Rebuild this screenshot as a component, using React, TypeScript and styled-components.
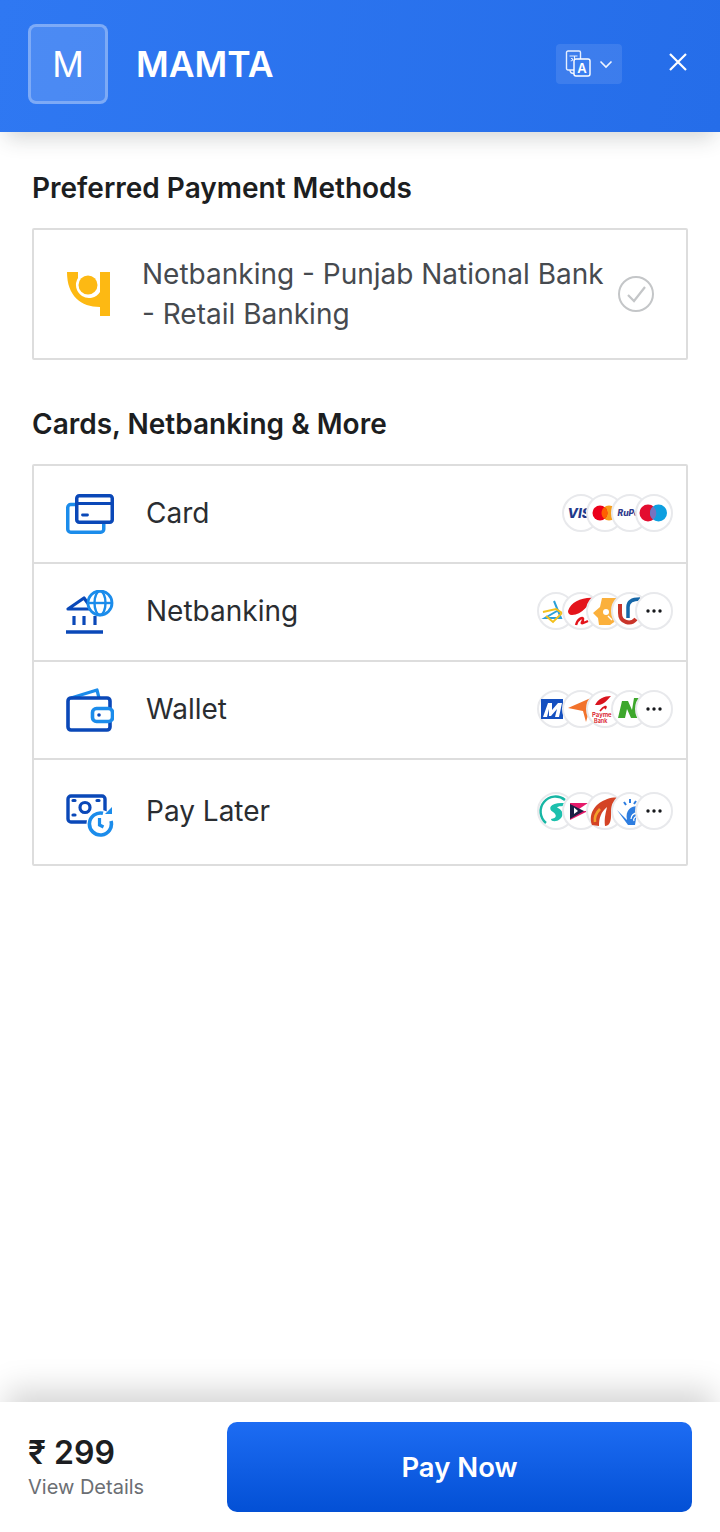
import React from "react";
import styled, { createGlobalStyle } from "styled-components";

const Global = createGlobalStyle`
  html, body { margin: 0; padding: 0; background: #fff; }
  body { font-family: Inter, "Noto Sans", sans-serif; color: #1c1e21; }
  * { box-sizing: border-box; }
`;

const Page = styled.div`
  width: 720px;
  height: 1532px;
  display: flex;
  flex-direction: column;
  background: #fff;
  overflow: hidden;
`;

const Header = styled.header`
  position: relative;
  height: 132px;
  flex: none;
  display: flex;
  align-items: center;
  padding: 0 32px 4px 28px;
  background: linear-gradient(100deg, #2f78f2 0%, #256de9 100%);
  box-shadow: 0 12px 20px -6px rgba(40, 50, 50, 0.2);
`;

const Avatar = styled.div`
  width: 80px;
  height: 80px;
  flex: none;
  display: flex;
  align-items: center;
  justify-content: center;
  border: 3px solid rgba(255, 255, 255, 0.28);
  border-radius: 8px;
  background: rgba(255, 255, 255, 0.14);
  color: #fff;
  font-size: 35px;
  font-weight: 400;
`;

const Merchant = styled.h1`
  margin: 2px 0 0 28px;
  flex: 1;
  color: #fff;
  font-size: 35.5px;
  line-height: 44px;
  font-weight: 600;
`;

const LangButton = styled.div`
  width: 66px;
  height: 40px;
  flex: none;
  display: flex;
  align-items: center;
  gap: 6px;
  padding-left: 9px;
  border-radius: 4px;
  background: rgba(255, 255, 255, 0.1);
`;

const CloseButton = styled.div`
  margin-left: 46px;
  width: 20px;
  height: 20px;
  flex: none;
  display: flex;
  align-items: center;
  justify-content: center;
  margin-bottom: 5px;
`;

const Main = styled.main`
  flex: 1;
  padding: 36px 32px 0;
  display: flex;
  flex-direction: column;
`;

const SectionTitle = styled.h2`
  margin: 0 0 20px;
  height: 40px;
  font-size: 28px;
  line-height: 40px;
  font-weight: 600;
  color: #1c1e21;
`;

const PreferredCard = styled.div`
  display: flex;
  align-items: center;
  height: 132px;
  padding: 0 31px 0 33px;
  margin-bottom: 44px;
  border: 2px solid #ddd;
  border-radius: 2px;
`;

const PreferredText = styled.div`
  flex: 1;
  margin-left: 31px;
  font-size: 28px;
  line-height: 40px;
  color: #464a4f;
`;

const List = styled.div`
  border: 2px solid #ddd;
  border-radius: 2px;
`;

const Row = styled.div<{ $tall?: boolean }>`
  display: flex;
  align-items: center;
  height: ${(p) => (p.$tall ? 104 : 98)}px;
  padding: 0 13px 0 32px;
  border-bottom: ${(p) => (p.$tall ? "none" : "2px solid #ddd")};
`;

const RowIcon = styled.div<{ $drop?: number }>`
  width: 48px;
  height: 44px;
  flex: none;
  display: flex;
  align-items: center;
  margin-top: ${(p) => p.$drop ?? 0}px;
`;

const RowLabel = styled.div`
  flex: 1;
  margin: 0 0 2px 32px;
  font-size: 28px;
  line-height: 40px;
  color: #2a2d31;
`;

const Coins = styled.div`
  display: flex;
  flex: none;
  margin-bottom: 2px;
`;

const Coin = styled.div`
  position: relative;
  width: 38px;
  height: 38px;
  flex: none;
  border: 2px solid #e8e9ec;
  border-radius: 50%;
  background: #fff;
  & + & {
    margin-left: -13.5px;
  }
  svg {
    display: block;
    margin: -2px;
  }
`;

const Footer = styled.footer`
  position: relative;
  height: 130px;
  flex: none;
  display: flex;
  align-items: flex-start;
  padding: 20px 28px 0;
  background: #fff;
  box-shadow: 0 -18px 30px -6px rgba(0, 0, 0, 0.17);
`;

const PriceBlock = styled.div`
  width: 199px;
  flex: none;
  padding-top: 11px;
`;

const Price = styled.div`
  font-size: 32px;
  line-height: 40px;
  font-weight: 600;
  color: #1c1e21;
`;

const Details = styled.div`
  margin-top: 1px;
  font-size: 20px;
  line-height: 26px;
  color: #6b6e73;
`;

const PayButton = styled.button`
  width: 465px;
  height: 90px;
  flex: none;
  border: none;
  border-radius: 10px;
  background: linear-gradient(180deg, #1d6cf3 0%, #0350d5 100%);
  color: #fff;
  font-family: inherit;
  font-size: 27.5px;
  font-weight: 600;
`;

const DARK = "#0a48b8";
const LIGHT = "#1b8ceb";

const CardIcon = () => (
  <svg width="48" height="40" viewBox="0 0 48 40" fill="none">
    <rect x="1.75" y="10.5" width="36" height="27.75" rx="3" stroke={LIGHT} strokeWidth="3.5" />
    <rect x="10.75" y="1.75" width="35.5" height="26.5" rx="2.5" fill="#fff" stroke={DARK} strokeWidth="3.5" />
    <path d="M10 9.5h36" stroke={DARK} strokeWidth="2.8" />
    <path d="M16.5 21h5" stroke={DARK} strokeWidth="2.8" strokeLinecap="round" />
  </svg>
);

const BankIcon = () => (
  <svg width="48" height="44" viewBox="0 0 48 44" fill="none">
    <path d="M2 19 L18 8 L26 19 Z" stroke={DARK} strokeWidth="3.2" strokeLinejoin="round" />
    <path d="M8 26v9M18 26v9M29 26v9" stroke={DARK} strokeWidth="3.2" />
    <path d="M0 42h37" stroke={DARK} strokeWidth="3.4" />
    <circle cx="34" cy="13" r="12" fill="#fff" stroke={LIGHT} strokeWidth="2.8" />
    <ellipse cx="34" cy="13" rx="5.5" ry="12" stroke={LIGHT} strokeWidth="2.4" />
    <path d="M22 13h24" stroke={LIGHT} strokeWidth="2.4" />
  </svg>
);

const WalletIcon = () => (
  <svg width="48" height="44" viewBox="0 0 48 44" fill="none">
    <path d="M5 10 L31 2 L33 10" stroke={LIGHT} strokeWidth="3.2" strokeLinejoin="round" />
    <rect x="2" y="10" width="42" height="32" rx="3" stroke={DARK} strokeWidth="3.6" />
    <rect x="26.5" y="20.5" width="20" height="13" rx="4" fill="#fff" stroke={LIGHT} strokeWidth="3.6" />
    <circle cx="33" cy="27" r="1.8" fill={DARK} />
  </svg>
);

const LaterIcon = () => (
  <svg width="48" height="44" viewBox="0 0 48 44" fill="none">
    <rect x="2" y="2" width="37" height="26" rx="3" stroke={DARK} strokeWidth="3.4" />
    <circle cx="19" cy="13.5" r="5" stroke={DARK} strokeWidth="3.2" />
    <path d="M7 6.5h2M31 6.5h2M7 21h2M31 21h2" stroke={DARK} strokeWidth="3.2" strokeLinecap="round" />
    <circle cx="34.5" cy="30" r="14" fill="#fff" />
    <path d="M45 27 A11 11 0 1 1 37 19.3" stroke={LIGHT} strokeWidth="3.6" />
    <path d="M39 20 h7 v-7 z" fill={LIGHT} />
    <path d="M33.5 24 v7 l4 2" stroke={LIGHT} strokeWidth="3.2" />
  </svg>
);

const PnbLogo = () => (
  <svg width="44" height="44" viewBox="0 0 44 44" style={{ flex: "none" }}>
    <path d="M0 0 H11 V6 A13 13 0 1 0 33 20 V0 H43 V44 H33 V35 C14 35 0 24 0 0 Z" fill="#fdb913" />
    <circle cx="21" cy="13" r="9.5" fill="#fdb913" />
  </svg>
);

const Translate = () => (
  <svg width="28" height="28" viewBox="0 0 28 28" fill="none" style={{ flex: "none" }}>
    <rect x="1.5" y="1" width="14" height="19" rx="1.5" stroke="#e6efff" strokeWidth="1.4" />
    <path d="M4.5 6h8M6 8.5c2-.5 2.5 2-.3 2.5M9.5 6v7" stroke="#e6efff" strokeWidth="1.1" />
    <path d="M5 20c0 3 2 3.5 4 3.5" stroke="#e6efff" strokeWidth="1.4" />
    <rect x="9" y="9" width="16" height="17" rx="2" fill="#3b7ff0" stroke="#fff" strokeWidth="1.4" />
    <text x="17" y="22.5" fontSize="13" fontWeight="600" fill="#fff" textAnchor="middle" fontFamily="Inter, sans-serif">A</text>
  </svg>
);

const Chevron = () => (
  <svg width="14" height="14" viewBox="0 0 14 14" fill="none" style={{ flex: "none" }}>
    <path d="M1.5 4.5 L7 10 L12.5 4.5" stroke="#f0f5ff" strokeWidth="1.6" />
  </svg>
);

const Close = () => (
  <svg width="20" height="20" viewBox="0 0 20 20" fill="none">
    <path d="M2 2 L18 18 M18 2 L2 18" stroke="#fff" strokeWidth="2.2" />
  </svg>
);

const Check = () => (
  <svg width="38" height="38" viewBox="0 0 38 38" fill="none" style={{ flex: "none" }}>
    <circle cx="19" cy="19" r="17" stroke="#c4c6c8" strokeWidth="2" />
    <path d="M11 20 L17 26 L28 12" stroke="#c4c6c8" strokeWidth="2.2" />
  </svg>
);

const Mark = ({ children }: { children: React.ReactNode }) => (
  <svg width="38" height="38" viewBox="0 0 38 38" fill="none">
    {children}
  </svg>
);

const logos: Record<string, React.ReactNode> = {
  visa: <text x="5.5" y="24" fontSize="13.5" fontWeight="800" fontStyle="italic" fill="#1f3a8c" fontFamily="Inter, sans-serif">VIS</text>,
  master: (
    <>
      <circle cx="23" cy="19" r="7.5" fill="#f79e1b" />
      <circle cx="14" cy="19" r="7.5" fill="#eb001b" />
      <path d="M18.5 13a7.5 7.5 0 0 1 0 12a7.5 7.5 0 0 1 0-12z" fill="#ff5f00" />
    </>
  ),
  rupay: <text x="6.5" y="22" fontSize="8.5" fontWeight="800" fontStyle="italic" fill="#2e3a8c" fontFamily="Inter, sans-serif">RuPa</text>,
  maestro: (
    <>
      <circle cx="13" cy="19" r="8.5" fill="#e30d2f" />
      <circle cx="23.5" cy="19" r="8.5" fill="#0e9fe0" />
      <path d="M18.2 12.4a8.5 8.5 0 0 1 0 13.2a8.5 8.5 0 0 1 0-13.2z" fill="#7673c0" />
    </>
  ),
  axis: (
    <>
      <path d="M17 9 L24 26 H8 L20 19" stroke="#2a9fd8" strokeWidth="2" />
      <path d="M6 20 L19 17 L25 21 L16 30 L9 24" stroke="#f3c01c" strokeWidth="2" />
    </>
  ),
  bird: (
    <>
      <path d="M6 19 C9 10 20 5 32 6 C27 12 20 23 10 23 C7 23 6 21 6 19 Z" fill="#e4141b" />
      <path d="M14 33 C16 26 22 24 21 28 C20 31 17 33 26 29" stroke="#e4141b" strokeWidth="2.4" />
    </>
  ),
  hdfc: (
    <>
      <path d="M7 21 L14 15 L16 6 H31 V14 L27 18 L31 28 L24 33 H13 L12 26 Z" fill="#fbb03b" />
      <circle cx="20" cy="20" r="3" fill="#fff" />
      <path d="M22 24 L26 28" stroke="#fff" strokeWidth="1.5" />
    </>
  ),
  union: (
    <>
      <path d="M9 12 V21 C9 31 20 33 25 27" stroke="#c9342a" strokeWidth="4" />
      <path d="M17 26 V15 C17 9 22 7 29 7" stroke="#1667a8" strokeWidth="3.5" />
    </>
  ),
  mobi: (
    <>
      <path d="M4 9 H26 V29 H4 Z" fill="#1550c0" />
      <path d="M6 27 L11 13 H15 L15 20 L21 13 H25 L22 27 H18 L20 19 L14 26 H12 L12 19 L10 27 Z" fill="#fff" />
    </>
  ),
  free: <path d="M6 18 L31 7 L24 32 L21 21 Z" fill="#f2722b" />,
  airtel: (
    <>
      <path d="M9 15 C12 9 18 6 25 6 C22 9 18 15 12 15 Z" fill="#d9141e" />
      <path d="M14 21 C18 16 22 15 19 19" stroke="#d9141e" strokeWidth="1.6" />
      <text x="6" y="27" fontSize="6" fontWeight="600" fill="#d9141e" fontFamily="Inter, sans-serif">Payme</text>
      <text x="8" y="33" fontSize="5.5" fontWeight="600" fill="#d9141e" fontFamily="Inter, sans-serif">Bank</text>
    </>
  ),
  ola: <path d="M7 28 L11 11 H17 L21 20 L23 8 H29 L26 28 H20 L16 19 L14 28 Z" fill="#3da72c" />,
  simpl: (
    <>
      <path d="M28 8 A14 14 0 1 0 9 31" stroke="#17b6a4" strokeWidth="2.4" />
      <path d="M27 11 C14 10 10 16 16 20 C20 23 20 26 14 27 C14 30 20 30 23 27 C27 24 26 18 21 16 C19 15 21 14 29 14 Z" fill="#1cc0ad" />
    </>
  ),
  lazy: (
    <>
      <path d="M8 11 H26 L14 19 L26 19 L8 28 V24 L14 21 H8 Z" fill="#e6196a" />
      <path d="M8 12 L22 19 L8 27 Z" fill="#1c2045" />
      <path d="M12 15.5 L16 19 L12 22 Z" fill="#fff" />
    </>
  ),
  flame: (
    <>
      <path d="M6 33 C2 22 9 12 19 8 C23 6 27 5 31 6 C27 11 25 16 25 24 C25 30 23 34 19 34 C18 26 20 20 21 15 C15 20 13 26 13 34 Z" fill="#d44325" />
      <path d="M9 30 C8 24 11 20 14 17" stroke="#f2a02d" strokeWidth="2.6" />
    </>
  ),
  blue: (
    <>
      <path d="M6 18 L16 28 C14 18 20 14 27 14 L24 33 H17 Z" fill="#2d7de0" />
      <path d="M20 27 A6 6 0 0 1 26 21 M23 29 A3 3 0 0 1 27 25" stroke="#fff" strokeWidth="1.3" />
      <path d="M19 7 V11 M13 10 L15 13 M25 9 L23 12" stroke="#2d7de0" strokeWidth="2" />
    </>
  ),
  more: (
    <>
      <circle cx="13" cy="19" r="1.7" fill="#16181c" />
      <circle cx="19" cy="19" r="1.7" fill="#16181c" />
      <circle cx="25" cy="19" r="1.7" fill="#16181c" />
    </>
  ),
};

const rows = [
  { label: "Card", icon: <CardIcon />, coins: ["visa", "master", "rupay", "maestro"] },
  { label: "Netbanking", icon: <BankIcon />, coins: ["axis", "bird", "hdfc", "union", "more"] },
  { label: "Wallet", icon: <WalletIcon />, coins: ["mobi", "free", "airtel", "ola", "more"] },
  { label: "Pay Later", icon: <LaterIcon />, coins: ["simpl", "lazy", "flame", "blue", "more"], tall: true, drop: 8 },
];

export default function App() {
  return (
    <Page>
      <Global />
      <Header>
        <Avatar>M</Avatar>
        <Merchant>MAMTA</Merchant>
        <LangButton>
          <Translate />
          <Chevron />
        </LangButton>
        <CloseButton>
          <Close />
        </CloseButton>
      </Header>
      <Main>
        <SectionTitle>Preferred Payment Methods</SectionTitle>
        <PreferredCard>
          <PnbLogo />
          <PreferredText>Netbanking - Punjab National Bank - Retail Banking</PreferredText>
          <Check />
        </PreferredCard>
        <SectionTitle>Cards, Netbanking &amp; More</SectionTitle>
        <List>
          {rows.map((r) => (
            <Row key={r.label} $tall={r.tall}>
              <RowIcon $drop={r.drop}>{r.icon}</RowIcon>
              <RowLabel>{r.label}</RowLabel>
              <Coins>
                {r.coins.map((c) => (
                  <Coin key={c}>
                    <Mark>{logos[c]}</Mark>
                  </Coin>
                ))}
              </Coins>
            </Row>
          ))}
        </List>
      </Main>
      <Footer>
        <PriceBlock>
          <Price>₹ 299</Price>
          <Details>View Details</Details>
        </PriceBlock>
        <PayButton>Pay Now</PayButton>
      </Footer>
    </Page>
  );
}
